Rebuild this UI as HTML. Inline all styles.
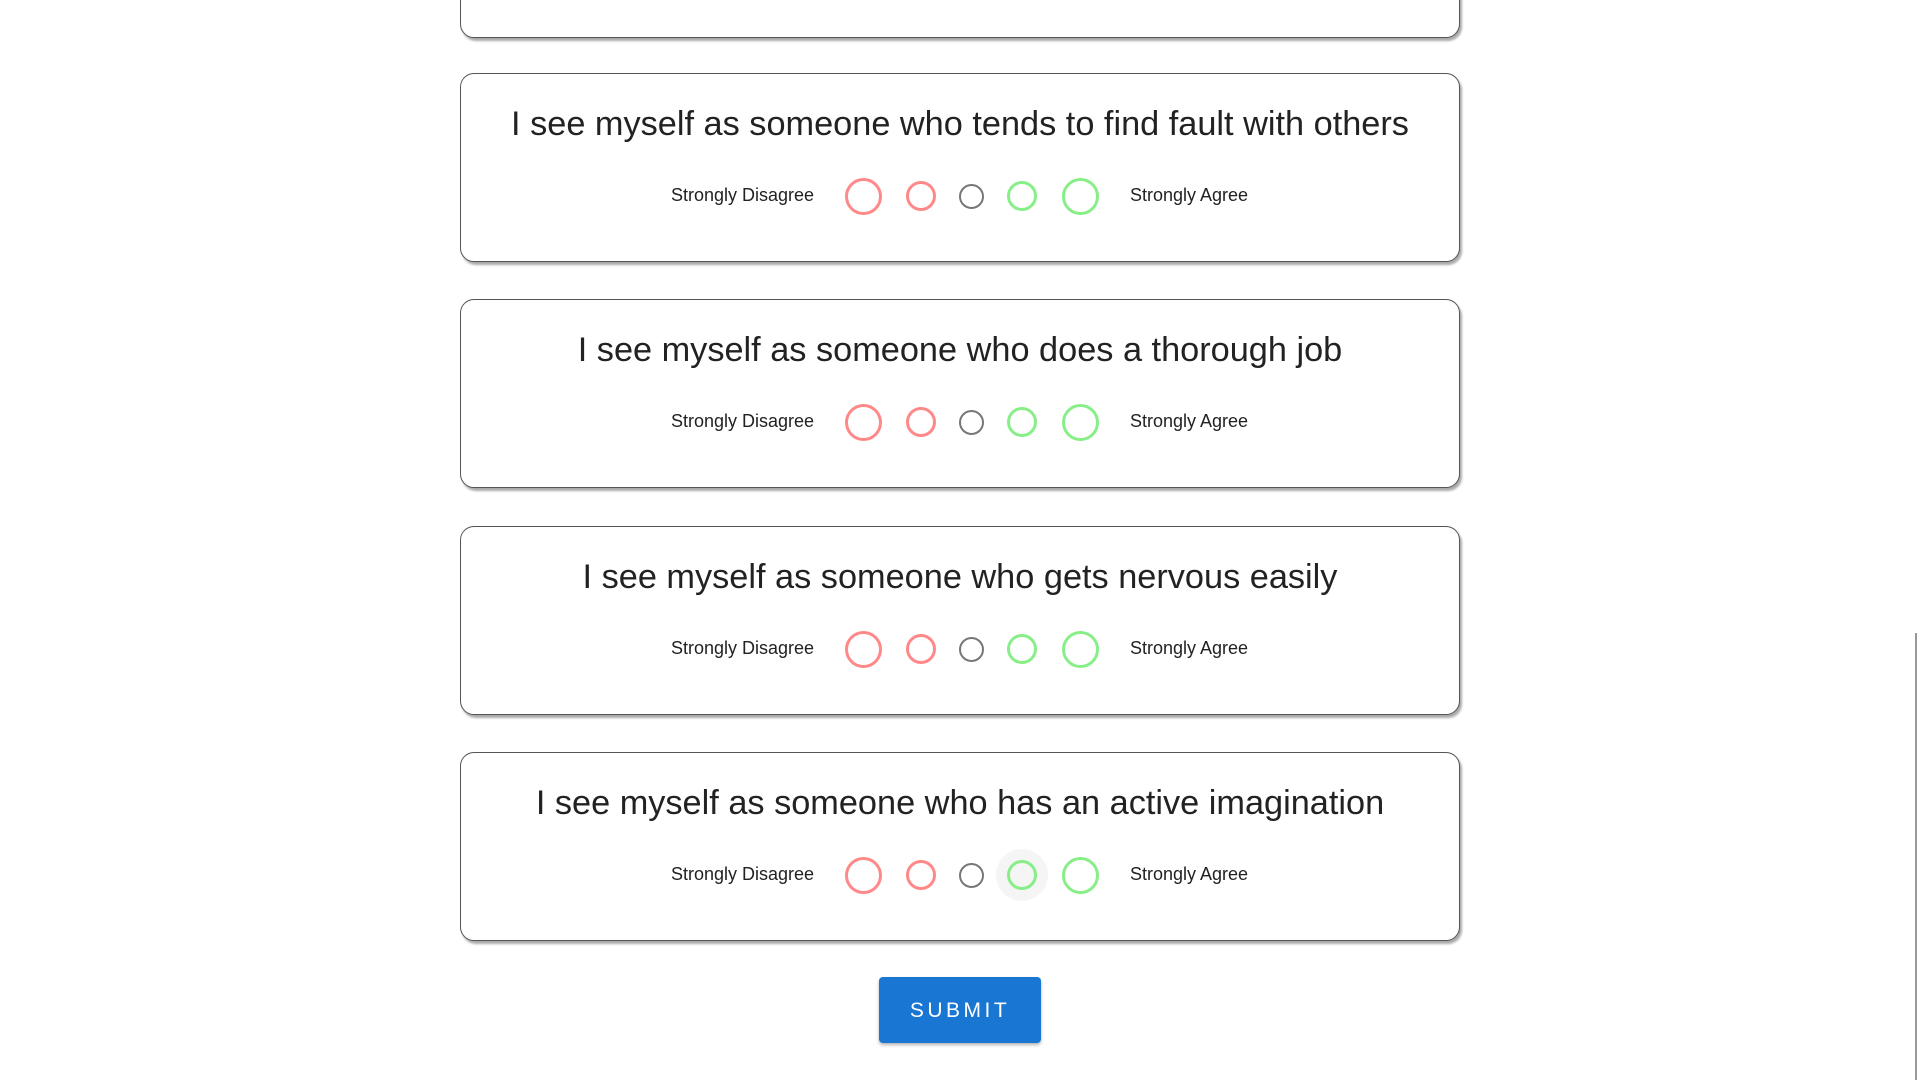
<!DOCTYPE html>
<html><head><meta charset="utf-8"><style>
body{margin:0;width:1920px;height:1080px;background:#fff;position:relative;overflow:hidden;font-family:"Liberation Sans",sans-serif;color:#222}
.card{position:absolute;left:460px;width:998px;height:187px;border:1px solid #555;border-radius:14px;box-shadow:2px 3px 2px #aaa;background:#fff}
.t{position:absolute;top:31px;left:0;right:0;text-align:center;font-size:34.3px;color:#222}
.l{position:absolute;top:112px;font-size:18px;color:#222}
.c{position:absolute;border-radius:50%;box-sizing:border-box}
.sb{position:absolute;left:879px;top:977px;width:162px;height:66px;background:#1976d2;border-radius:4px;box-shadow:0 2px 3px rgba(0,0,0,.3);color:#fff;font-size:21px;letter-spacing:3.5px;text-align:center;line-height:68px}
.scroll{position:absolute;left:1915px;top:633px;width:2px;height:447px;background:#999}
</style></head><body>
<div class="card" style="top:-151px"></div>
<div class="card" style="top:73px"><div class="t">I see myself as someone who tends to find fault with others</div></div>
<div class="card" style="top:299px"><div class="t">I see myself as someone who does a thorough job</div></div>
<div class="card" style="top:526px"><div class="t">I see myself as someone who gets nervous easily</div></div>
<div class="card" style="top:752px"><div class="t">I see myself as someone who has an active imagination</div></div>
<div class="sb">SUBMIT</div>
<div class="scroll"></div>
<script>
var tops=[73,299,526,752];
tops.forEach(function(t,i){
 var cy=t+123;
 var h='';
 if(i==3) h+='<div class="c" style="left:996px;top:'+(cy-26)+'px;width:52px;height:52px;background:rgba(0,0,0,0.04)"></div>';
 h+='<div class="l" style="left:671px;top:'+(cy-11)+'px">Strongly Disagree</div>';
 h+='<div class="l" style="left:1130px;top:'+(cy-11)+'px">Strongly Agree</div>';
 var r=[[863,37,3.5,'#f88'],[921,30,3,'#f88'],[971,25,2.5,'#777'],[1022,30,3,'#8e8'],[1080,37,3.5,'#8e8']];
 r.forEach(function(a){
  h+='<div class="c" style="left:'+(a[0]-a[1]/2)+'px;top:'+(cy-a[1]/2)+'px;width:'+a[1]+'px;height:'+a[1]+'px;border:'+a[2]+'px solid '+a[3]+'"></div>';
 });
 document.body.insertAdjacentHTML('beforeend',h);
});
</script>
</body></html>
